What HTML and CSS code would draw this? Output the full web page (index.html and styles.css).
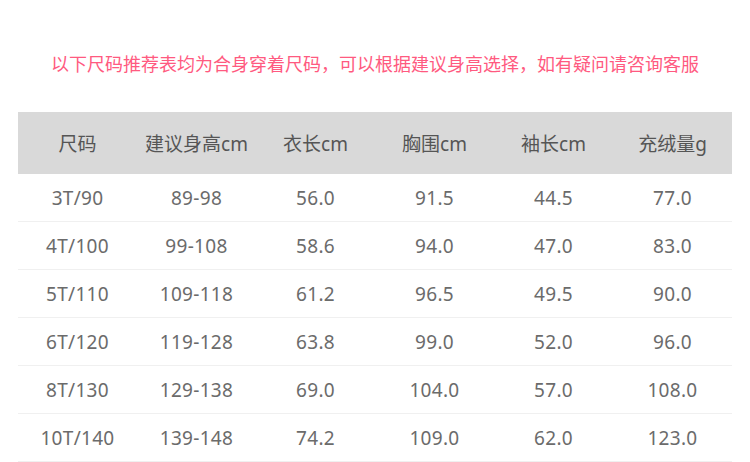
FILE: index.html
```html
<!DOCTYPE html>
<html lang="zh-CN">
<head>
<meta charset="utf-8">
<title>尺码表</title>
<link rel="stylesheet" href="styles.css">
</head>
<body>
<div class="page">
  <p class="notice">以下尺码推荐表均为合身穿着尺码，可以根据建议身高选择，如有疑问请咨询客服</p>
  <table class="size-table">
    <thead>
      <tr><th>尺码</th><th>建议身高cm</th><th>衣长cm</th><th>胸围cm</th><th>袖长cm</th><th>充绒量g</th></tr>
    </thead>
    <tbody>
      <tr><td>3T/90</td><td>89-98</td><td>56.0</td><td>91.5</td><td>44.5</td><td>77.0</td></tr>
      <tr><td>4T/100</td><td>99-108</td><td>58.6</td><td>94.0</td><td>47.0</td><td>83.0</td></tr>
      <tr><td>5T/110</td><td>109-118</td><td>61.2</td><td>96.5</td><td>49.5</td><td>90.0</td></tr>
      <tr><td>6T/120</td><td>119-128</td><td>63.8</td><td>99.0</td><td>52.0</td><td>96.0</td></tr>
      <tr><td>8T/130</td><td>129-138</td><td>69.0</td><td>104.0</td><td>57.0</td><td>108.0</td></tr>
      <tr><td>10T/140</td><td>139-148</td><td>74.2</td><td>109.0</td><td>62.0</td><td>123.0</td></tr>
    </tbody>
  </table>
</div>
</body>
</html>
```
FILE: styles.css
```css
html, body {
  margin: 0;
  padding: 0;
  background: #ffffff;
}
.page {
  width: 750px;
  padding-top: 51px;
  font-family: "Noto Sans", "Noto Sans CJK SC", sans-serif;
}
.notice {
  margin: 0;
  height: 24px;
  line-height: 24px;
  font-size: 18px;
  color: #ff5a80;
  text-align: center;
  font-family: "Noto Sans CJK SC", sans-serif;
}
.size-table {
  margin: 37px 0 0 18px;
  width: 714px;
  border-collapse: collapse;
  table-layout: fixed;
}
.size-table th {
  height: 62px;
  padding: 0;
  background: #d9d9d9;
  color: #555555;
  font-weight: normal;
  font-size: 19px;
  text-align: center;
}
.size-table td {
  height: 47px;
  padding: 0;
  border-bottom: 1px solid #f0f0f0;
  color: #6b6b6b;
  font-size: 19px;
  letter-spacing: 0.3px;
  text-align: center;
}
```
